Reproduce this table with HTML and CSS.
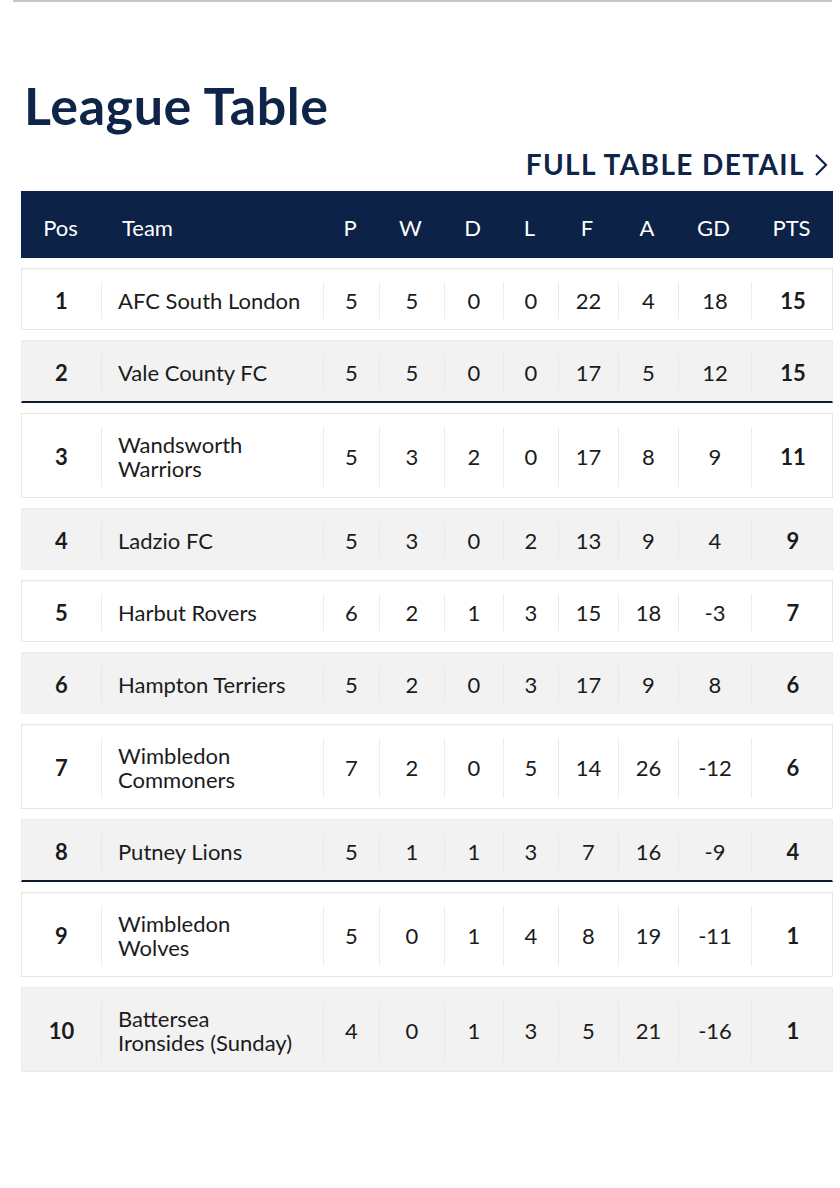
FILE: index.html
```html
<!DOCTYPE html>
<html lang="en">
<head>
<meta charset="utf-8">
<title>League Table</title>
<link rel="stylesheet" href="styles.css">
</head>
<body>
<div class="topline"></div>
<section class="league">
  <h1 class="title">League Table</h1>
  <a class="detail-link" href="#">FULL TABLE DETAIL
    <svg class="chev" width="14" height="24" viewBox="0 0 14 24" aria-hidden="true"><path d="M2 2 L12 12 L2 22" fill="none" stroke="currentColor" stroke-width="2.2"/></svg>
  </a>
  <div class="table">
    <div class="head">
      <div class="h pos">Pos</div>
      <div class="h team">Team</div>
      <div class="h">P</div>
      <div class="h">W</div>
      <div class="h">D</div>
      <div class="h">L</div>
      <div class="h">F</div>
      <div class="h">A</div>
      <div class="h">GD</div>
      <div class="h">PTS</div>
    </div>

    <div class="row">
      <div class="c pos">1</div><div class="c team">AFC South London</div>
      <div class="c">5</div><div class="c">5</div><div class="c">0</div><div class="c">0</div><div class="c">22</div><div class="c">4</div><div class="c">18</div><div class="c pts">15</div>
    </div>
    <div class="row alt cut">
      <div class="c pos">2</div><div class="c team">Vale County FC</div>
      <div class="c">5</div><div class="c">5</div><div class="c">0</div><div class="c">0</div><div class="c">17</div><div class="c">5</div><div class="c">12</div><div class="c pts">15</div>
    </div>
    <div class="row">
      <div class="c pos">3</div><div class="c team"><span class="ln">Wandsworth</span><span class="ln">Warriors</span></div>
      <div class="c">5</div><div class="c">3</div><div class="c">2</div><div class="c">0</div><div class="c">17</div><div class="c">8</div><div class="c">9</div><div class="c pts">11</div>
    </div>
    <div class="row alt">
      <div class="c pos">4</div><div class="c team">Ladzio FC</div>
      <div class="c">5</div><div class="c">3</div><div class="c">0</div><div class="c">2</div><div class="c">13</div><div class="c">9</div><div class="c">4</div><div class="c pts">9</div>
    </div>
    <div class="row">
      <div class="c pos">5</div><div class="c team">Harbut Rovers</div>
      <div class="c">6</div><div class="c">2</div><div class="c">1</div><div class="c">3</div><div class="c">15</div><div class="c">18</div><div class="c">-3</div><div class="c pts">7</div>
    </div>
    <div class="row alt">
      <div class="c pos">6</div><div class="c team">Hampton Terriers</div>
      <div class="c">5</div><div class="c">2</div><div class="c">0</div><div class="c">3</div><div class="c">17</div><div class="c">9</div><div class="c">8</div><div class="c pts">6</div>
    </div>
    <div class="row">
      <div class="c pos">7</div><div class="c team"><span class="ln">Wimbledon</span><span class="ln">Commoners</span></div>
      <div class="c">7</div><div class="c">2</div><div class="c">0</div><div class="c">5</div><div class="c">14</div><div class="c">26</div><div class="c">-12</div><div class="c pts">6</div>
    </div>
    <div class="row alt cut">
      <div class="c pos">8</div><div class="c team">Putney Lions</div>
      <div class="c">5</div><div class="c">1</div><div class="c">1</div><div class="c">3</div><div class="c">7</div><div class="c">16</div><div class="c">-9</div><div class="c pts">4</div>
    </div>
    <div class="row">
      <div class="c pos">9</div><div class="c team"><span class="ln">Wimbledon</span><span class="ln">Wolves</span></div>
      <div class="c">5</div><div class="c">0</div><div class="c">1</div><div class="c">4</div><div class="c">8</div><div class="c">19</div><div class="c">-11</div><div class="c pts">1</div>
    </div>
    <div class="row alt">
      <div class="c pos">10</div><div class="c team"><span class="ln">Battersea</span><span class="ln">Ironsides (Sunday)</span></div>
      <div class="c">4</div><div class="c">0</div><div class="c">1</div><div class="c">3</div><div class="c">5</div><div class="c">21</div><div class="c">-16</div><div class="c pts">1</div>
    </div>
  </div>
</section>
</body>
</html>
```

FILE: styles.css
```css
* { box-sizing: border-box; }

body {
  margin: 0;
  background: #fff;
  font-family: "Lato", "Open Sans", sans-serif;
  color: #1b1b1b;
}

.topline {
  height: 2px;
  margin: 0 8px 0 13px;
  background: #c6c6c6;
}

.league {
  display: flex;
  flex-direction: column;
  padding: 0 7px 0 21px;
}

.title {
  margin: 73px 0 0 3px;
  font-size: 52px;
  line-height: 60px;
  font-weight: 700;
  color: #0e2448;
  letter-spacing: 0.6px;
}

.detail-link {
  align-self: flex-end;
  display: flex;
  align-items: center;
  gap: 9px;
  margin: 12px 5px 0 0;
  font-size: 28px;
  line-height: 34px;
  font-weight: 700;
  letter-spacing: 1.4px;
  color: #0e2448;
  text-decoration: none;
}

.chev { margin-top: 1px; }

.table {
  display: flex;
  flex-direction: column;
  gap: 10px;
  margin-top: 10px;
}

.head, .row {
  display: grid;
  grid-template-columns: 79px 222px 56px 65px 59px 55px 60px 60px 73px 83px;
}

.head {
  height: 67px;
  background: #0c2246;
  color: #fff;
  align-items: center;
  padding-top: 5px;
}

.h {
  font-size: 22px;
  text-align: center;
}

.h.team {
  text-align: left;
  padding-left: 22px;
}

.row {
  border: 1px solid #e6e6e6;
  background: #fff;
}

.row.alt {
  background: #f2f2f2;
  border-color: #ececec;
}

.row.cut {
  border-bottom: 2px solid #0d1a2e;
}

.c {
  display: flex;
  align-items: center;
  justify-content: center;
  margin: 13px 0 10px;
  min-height: 37px;
  border-left: 1px solid #ececec;
  font-size: 22px;
  line-height: 24px;
}

.row.alt .c { border-left-color: #e8e8e8; }

.c.pos {
  border-left: none;
  font-weight: 700;
}

.c.team {
  flex-direction: column;
  justify-content: center;
  align-items: flex-start;
  padding: 6px 0 6px 16px;
}

.ln {
  display: block;
  height: 24px;
  line-height: 24px;
}

.c.pts { font-weight: 700; }
```
